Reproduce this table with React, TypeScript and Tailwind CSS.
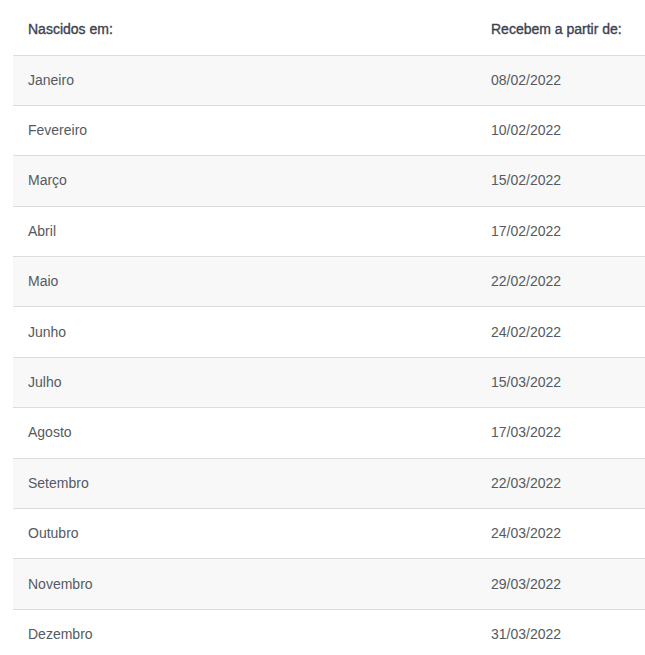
const rows: [string, string][] = [
  ['Janeiro', '08/02/2022'],
  ['Fevereiro', '10/02/2022'],
  ['Março', '15/02/2022'],
  ['Abril', '17/02/2022'],
  ['Maio', '22/02/2022'],
  ['Junho', '24/02/2022'],
  ['Julho', '15/03/2022'],
  ['Agosto', '17/03/2022'],
  ['Setembro', '22/03/2022'],
  ['Outubro', '24/03/2022'],
  ['Novembro', '29/03/2022'],
  ['Dezembro', '31/03/2022'],
];

export default function App() {
  return (
    <div className="w-[645px] h-[655px] overflow-hidden bg-white pt-[5px] pl-[13px] font-['Liberation_Sans',Arial,sans-serif]">
      <table className="w-[632px] border-collapse">
        <thead>
          <tr className="h-[50px] border-b border-[#dcdcdc]">
            <th className="w-[463px] pl-[15px] text-left align-middle text-[14px] font-normal text-[#3b4250] [-webkit-text-stroke:0.35px_#3b4250]">Nascidos em:</th>
            <th className="pl-[15px] text-left align-middle text-[14px] font-normal text-[#3b4250] [-webkit-text-stroke:0.35px_#3b4250]">Recebem a partir de:</th>
          </tr>
        </thead>
        <tbody>
          {rows.map(([month, date], i) => (
            <tr key={month} className={`h-[50.4px] border-b border-[#dcdcdc] ${i % 2 === 0 ? 'bg-[#f8f8f8]' : 'bg-white'}`}>
              <td className="pl-[15px] align-middle text-[14px] text-[#555a62]">{month}</td>
              <td className="pl-[15px] align-middle text-[14px] text-[#555a62]">{date}</td>
            </tr>
          ))}
        </tbody>
      </table>
    </div>
  );
}
